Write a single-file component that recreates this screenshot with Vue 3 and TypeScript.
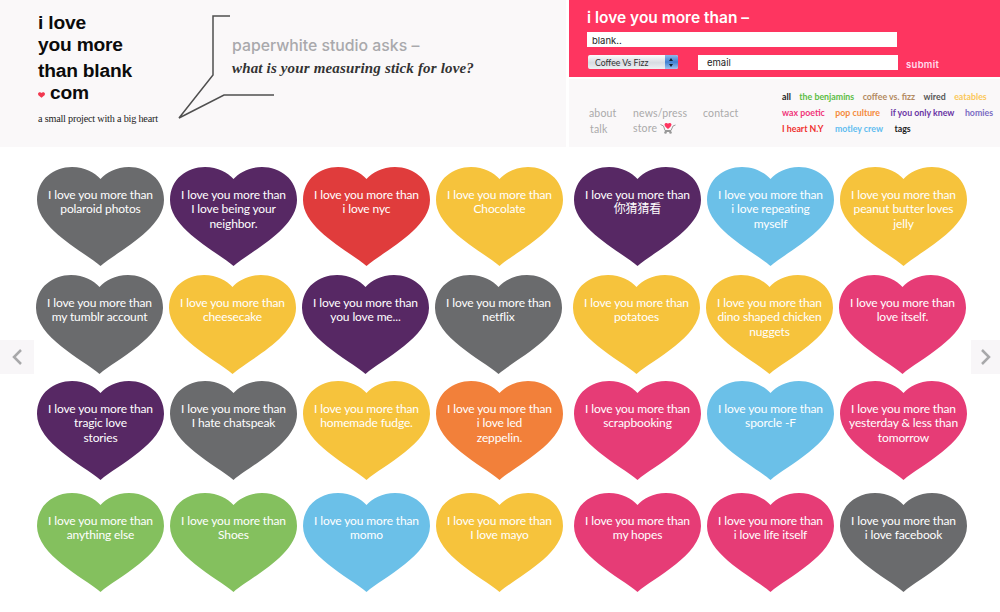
<template>
  <div class="page">
    <header class="top">
      <section class="intro">
        <div class="logo">
          <div class="logo-line">i love</div>
          <div class="logo-line">you more</div>
          <div class="logo-line tall">than blank</div>
          <div class="logo-line com">
            <svg class="logo-heart" viewBox="0 0 127 99"><path :d="heartPath" /></svg>
            <span>com</span>
          </div>
          <p class="tagline">a small project with a big heart</p>
        </div>
        <svg class="bubble" width="110" height="110" viewBox="0 0 110 110">
          <path d="M56 6H39V65L5 108 50 85H100" />
        </svg>
        <div class="asks">
          <h2>paperwhite studio asks –</h2>
          <p>what is your measuring stick for love?</p>
        </div>
      </section>
      <section class="side">
        <form class="entry" @submit.prevent>
          <h1>i love you more than –</h1>
          <input class="blank" type="text" value="blank.." />
          <div class="entry-row">
            <div class="picker">
              <select>
                <option>Coffee Vs Fizz</option>
              </select>
              <span class="stepper"></span>
            </div>
            <input class="email" type="text" value="email" />
            <button type="submit">submit</button>
          </div>
        </form>
        <nav class="links">
          <div class="pages">
            <a>about</a><a>news/press</a><a>contact</a>
            <a class="talk">talk</a>
            <a class="store">store
              <svg width="16" height="12" viewBox="0 0 16 12">
                <path class="cart" d="M0.500 2.500 3.500 4 5 8.500H11L13 4 15.500 3M5 9.500H11" />
                <circle class="wheel" cx="5.500" cy="10.500" r="1.300" />
                <circle class="wheel" cx="10.500" cy="10.500" r="1.300" />
                <path class="cart-heart" d="M8 7C6.500 5.800 4.500 4.600 4.500 2.600 4.500 1 7 0.300 8 1.800 9 0.300 11.500 1 11.500 2.600 11.500 4.600 9.500 5.800 8 7Z" />
              </svg>
            </a>
          </div>
          <div class="tags">
            <div v-for="(row, i) in tagRows" :key="i" class="tag-row">
              <a v-for="tag in row" :key="tag.label" :class="tag.cls">{{ tag.label }}</a>
            </div>
          </div>
        </nav>
      </section>
    </header>

    <main class="wall">
      <div v-for="(row, r) in rows" :key="r" class="row">
        <div v-for="(item, i) in row" :key="i" class="heart" :class="item.color">
          <svg viewBox="0 0 127 99" preserveAspectRatio="none"><path :d="heartPath" /></svg>
          <p>I love you more than<br /><span v-html="item.text"></span></p>
        </div>
      </div>
    </main>

    <button class="arrow prev" type="button">
      <svg width="12" height="18" viewBox="0 0 12 18"><path d="M10 2 3 9l7 7" /></svg>
    </button>
    <button class="arrow next" type="button">
      <svg width="12" height="18" viewBox="0 0 12 18"><path d="M2 2l7 7-7 7" /></svg>
    </button>
  </div>
</template>

<script setup lang="ts">
interface Love {
  text: string
  color: string
}

interface Tag {
  label: string
  cls: string
}

const heartPath =
  'M63.500 99C46 84 0 62 0 33 0 12 17 0 35 0 48 0 58 6 63.500 12 69 6 79 0 92 0 110 0 127 12 127 33 127 62 81 84 63.500 99Z'

const tagRows: Tag[][] = [
  [
    { label: 'all', cls: 't-all' },
    { label: 'the benjamins', cls: 't-green' },
    { label: 'coffee vs. fizz', cls: 't-brown' },
    { label: 'wired', cls: 't-grey' },
    { label: 'eatables', cls: 't-yellow' }
  ],
  [
    { label: 'wax poetic', cls: 't-pink' },
    { label: 'pop culture', cls: 't-orange' },
    { label: 'if you only knew', cls: 't-purple' },
    { label: 'homies', cls: 't-violet' }
  ],
  [
    { label: 'I heart N.Y', cls: 't-red' },
    { label: 'motley crew', cls: 't-blue' },
    { label: 'tags', cls: 't-all' }
  ]
]

const rows: Love[][] = [
  [
    { text: 'polaroid photos', color: 'grey' },
    { text: 'I love being your<br>neighbor.', color: 'purple' },
    { text: 'i love nyc', color: 'red' },
    { text: 'Chocolate', color: 'yellow' },
    { text: '你猜猜看', color: 'purple' },
    { text: 'i love repeating<br>myself', color: 'blue' },
    { text: 'peanut butter loves<br>jelly', color: 'yellow' }
  ],
  [
    { text: 'my tumblr account', color: 'grey' },
    { text: 'cheesecake', color: 'yellow' },
    { text: 'you love me...', color: 'purple' },
    { text: 'netflix', color: 'grey' },
    { text: 'potatoes', color: 'yellow' },
    { text: 'dino shaped chicken<br>nuggets', color: 'yellow' },
    { text: 'love itself.', color: 'pink' }
  ],
  [
    { text: 'tragic love<br>stories', color: 'purple' },
    { text: 'I hate chatspeak', color: 'grey' },
    { text: 'homemade fudge.', color: 'yellow' },
    { text: 'i love led<br>zeppelin.', color: 'orange' },
    { text: 'scrapbooking', color: 'pink' },
    { text: 'sporcle -F', color: 'blue' },
    { text: 'yesterday &amp; less than<br>tomorrow', color: 'pink' }
  ],
  [
    { text: 'anything else', color: 'green' },
    { text: 'Shoes', color: 'green' },
    { text: 'momo', color: 'blue' },
    { text: 'I love mayo', color: 'yellow' },
    { text: 'my hopes', color: 'pink' },
    { text: 'i love life itself', color: 'pink' },
    { text: 'i love facebook', color: 'grey' }
  ]
]
</script>

<style>
html,
body {
  background: #fff;
}
</style>

<style scoped>
.page {
  position: relative;
  width: 1000px;
  height: 612px;
  overflow: hidden;
  font-family: Lato, "Noto Sans CJK SC", sans-serif;
}

.top {
  display: flex;
  gap: 3px;
  height: 147px;
}

.intro {
  position: relative;
  display: flex;
  width: 566px;
  padding: 12px 0 0 38px;
  box-sizing: border-box;
  background: #faf8f9;
}

.logo {
  width: 194px;
  color: #0b0b0b;
  font-family: "Liberation Sans", sans-serif;
  font-size: 19.200px;
  font-weight: 700;
  letter-spacing: -0.2px;
}

.logo-line {
  height: 22px;
  line-height: 22px;
}

.logo-line.tall {
  height: 25px;
  line-height: 30px;
}

.logo-line.com {
  display: flex;
  align-items: center;
  gap: 5px;
  padding-top: 1px;
}

.logo-heart {
  width: 7px;
  height: 6px;
  margin-top: 4px;
  fill: #f2384f;
}

.tagline {
  margin: 9px 0 0;
  color: #1c1c1c;
  font-family: "Liberation Serif", serif;
  font-size: 10.200px;
  font-weight: 400;
  white-space: nowrap;
}

.bubble {
  position: absolute;
  left: 174px;
  top: 10px;
  fill: none;
  stroke: #4f4f4f;
  stroke-width: 1.500;
}

.asks {
  padding-top: 25px;
}

.asks h2 {
  margin: 0;
  color: #a9a9ac;
  font-family: Inter, sans-serif;
  font-size: 15.800px;
  font-weight: 500;
  line-height: 18px;
}

.asks p {
  margin: 4px 0 0;
  color: #333;
  font-family: "Liberation Serif", serif;
  font-size: 15px;
  font-style: italic;
  font-weight: 700;
  letter-spacing: 0.16px;
  line-height: 18px;
}

.side {
  flex: 1;
  display: flex;
  flex-direction: column;
  gap: 2px;
}

.entry {
  height: 77px;
  padding: 9px 0 0 18px;
  box-sizing: border-box;
  background: #fe3560;
}

.entry h1 {
  margin: 0;
  color: #fff;
  font-family: Inter, sans-serif;
  font-size: 15.500px;
  font-weight: 600;
  line-height: 18px;
}

.entry input {
  display: block;
  height: 15px;
  padding: 2px 0 0;
  border: 0;
  border-radius: 0;
  outline: 0;
  background: #fff;
  color: #222;
  font-family: Inter, sans-serif;
  font-size: 9.500px;
}

.blank {
  width: 310px;
  margin-top: 5px;
  padding-left: 5px !important;
  box-sizing: border-box;
}

.entry-row {
  display: flex;
  align-items: center;
  margin-top: 7px;
}

.picker {
  position: relative;
  width: 90px;
  height: 14px;
  margin: 0 20px 0 1px;
}

.picker select {
  display: block;
  width: 100%;
  height: 100%;
  padding: 0 0 0 7px;
  border: 0;
  border-radius: 2px;
  background: linear-gradient(#fdfdfd, #d7dbe2 55%, #eef0f3);
  appearance: none;
  color: #333;
  font-family: Lato, sans-serif;
  font-size: 8.700px;
}

.stepper {
  position: absolute;
  top: 0;
  right: 0;
  width: 13px;
  height: 14px;
  border-radius: 0 2px 2px 0;
  background: linear-gradient(#8fb9ea, #3f7fd2 50%, #9cc4f0);
}

.stepper::before,
.stepper::after {
  content: "";
  position: absolute;
  left: 4px;
  border-left: 2.500px solid transparent;
  border-right: 2.500px solid transparent;
}

.stepper::before {
  top: 2.500px;
  border-bottom: 3.500px solid #123;
}

.stepper::after {
  bottom: 2.500px;
  border-top: 3.500px solid #123;
}

.email {
  width: 200px;
  padding: 0 0 0 9px !important;
  box-sizing: border-box;
}

.entry-row button {
  margin: 5px 0 0 8px;
  padding: 0;
  border: 0;
  background: none;
  color: #fde;
  font-family: Inter, sans-serif;
  font-size: 9.500px;
  font-weight: 600;
  letter-spacing: 0.3px;
}

.links {
  flex: 1;
  display: flex;
  background: #faf8f9;
}

.pages {
  display: grid;
  grid-template-columns: 44px 70px 60px;
  grid-auto-rows: 15.500px;
  align-content: start;
  width: 213px;
  padding: 26px 0 0 20px;
  box-sizing: border-box;
  color: #aaa;
  font-size: 10.500px;
  letter-spacing: 0.15px;
  line-height: 16px;
}

.pages .talk {
  padding-left: 1px;
}

.store {
  display: flex;
  align-items: center;
  gap: 3px;
  grid-column: span 2;
}

.cart {
  fill: none;
  stroke: #999;
  stroke-width: 1;
}

.wheel {
  fill: #999;
}

.cart-heart {
  fill: #fe3560;
}

.tags {
  padding-top: 10px;
  font-size: 8.800px;
  font-weight: 700;
  line-height: 16px;
}

.tag-row {
  display: flex;
  gap: 8.500px;
  white-space: nowrap;
}

.tag-row:nth-child(2) {
  gap: 10.500px;
}

.tag-row:nth-child(3) {
  gap: 11.500px;
}

.t-all { color: #222; }
.t-green { color: #5cbd45; }
.t-brown { color: #b38a60; }
.t-grey { color: #555; }
.t-yellow { color: #fbc85a; }
.t-pink { color: #f0357a; }
.t-orange { color: #f58a3c; }
.t-purple { color: #6b35a5; }
.t-violet { color: #7a6cc4; }
.t-red { color: #f0302f; }
.t-blue { color: #62bdf0; }

.wall {
  display: flex;
  flex-direction: column;
  padding: 20px 0 0 37px;
}

.row {
  display: flex;
  gap: 6px;
}

.row:nth-child(2) { margin-top: 9px; margin-left: -1px; }
.row:nth-child(3) { margin-top: 7px; }
.row:nth-child(4) { margin-top: 13px; }

.heart {
  position: relative;
  flex: none;
  width: 127px;
  height: 99px;
}

.heart:nth-child(5) {
  margin-left: 5px;
}

.heart svg {
  position: absolute;
  inset: 0;
  width: 100%;
  height: 100%;
}

.heart p {
  position: relative;
  margin: 0;
  padding-top: 20.500px;
  color: #fff;
  font-size: 12px;
  letter-spacing: -0.13px;
  line-height: 14.500px;
  text-align: center;
}

.grey { fill: #6a6b6d; }
.purple { fill: #572864; }
.red { fill: #e03c3c; }
.yellow { fill: #f6c33c; }
.blue { fill: #6bc0e8; }
.pink { fill: #e63c76; }
.orange { fill: #f2803a; }
.green { fill: #84c05e; }

.arrow {
  position: absolute;
  top: 340px;
  display: flex;
  align-items: center;
  justify-content: center;
  height: 34px;
  padding: 0;
  border: 0;
  background: #f8f6f8;
}

.arrow path {
  fill: none;
  stroke: #a8a8aa;
  stroke-width: 2.500;
}

.prev {
  left: 0;
  width: 34px;
}

.next {
  right: 0;
  width: 29px;
}
</style>
